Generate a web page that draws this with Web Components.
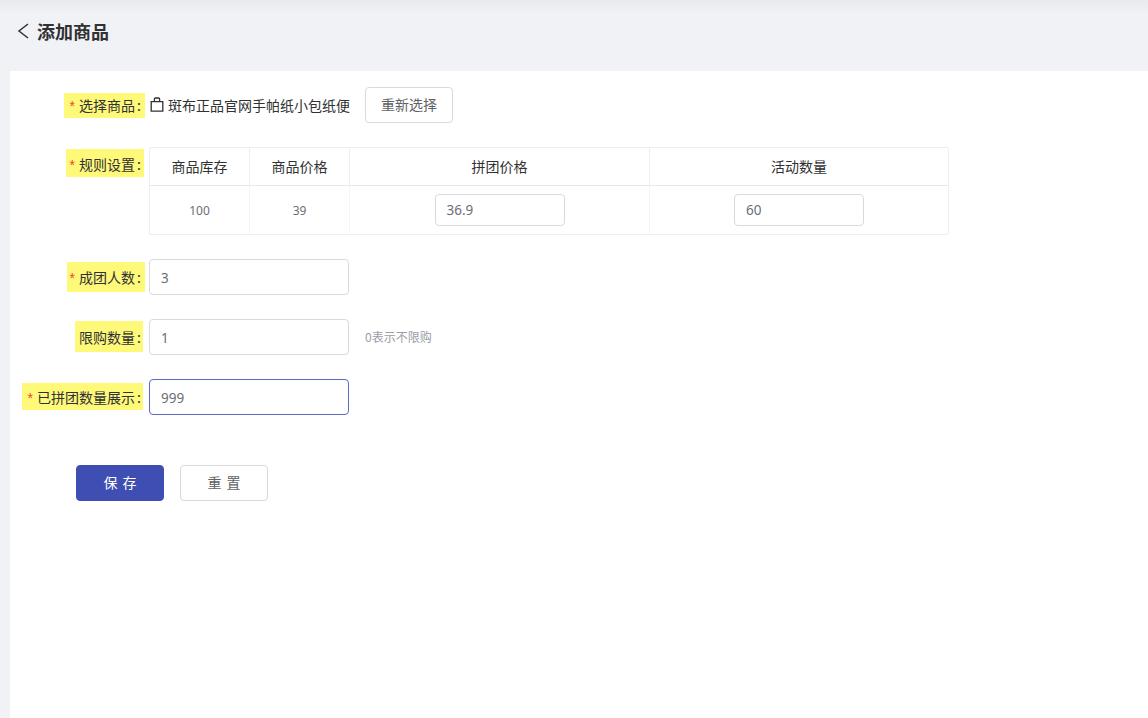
<!DOCTYPE html>
<html lang="zh"><head><meta charset="utf-8"><title>添加商品</title>
<style>
html,body{margin:0;height:100%;background:#f0f2f6;font-family:"Noto Sans CJK SC","Noto Sans",sans-serif;font-size:14px;overflow:hidden}
</style></head><body>
<add-page></add-page>
<script>
const F='"Noto Sans","Noto Sans CJK SC",sans-serif';
function def(name,css,html,init){customElements.define(name,class extends HTMLElement{connectedCallback(){if(this.shadowRoot)return;const s=this.attachShadow({mode:'open'});s.innerHTML='<style>'+css+'</style>'+html(this);if(init)init(this,s);}});}
def('page-header',`:host{display:flex;align-items:center;height:71px;box-sizing:border-box;padding:0 0 9px 17px;background:linear-gradient(#e9eaed,#f0f2f6 14px);color:#303133}
svg{width:13px;height:16px;margin-right:7px;flex:none}
h1{margin:0;font:700 18px/24px "Noto Sans CJK SC",sans-serif}`,
()=>`<svg viewBox="0 0 13 16"><path d="M11 1 2 8l9 7" fill="none" stroke="#303133" stroke-width="1.5"/></svg><h1><slot></slot></h1>`);
def('form-row',`:host{display:flex;align-items:flex-start;margin-bottom:var(--mb,24px)}
.lab{width:125px;margin-right:14px;flex:none;display:flex;justify-content:flex-end;padding-top:var(--lt,6px);box-sizing:border-box}
.hl{display:block;background:#fff97a;color:#303133;line-height:20px;padding:var(--pt,3px) 0 var(--pb,1px) var(--pl,5px);margin-right:calc(var(--cw,10px) * -1);white-space:nowrap}
.req{color:#f5402c;margin-right:4px;font-family:"Liberation Sans",sans-serif}
.col{display:inline-block;width:var(--cw,10px);padding-left:2px;box-sizing:border-box}
.c{display:flex;align-items:center;flex:none}`,
h=>`<div class="lab"><span class="hl">${h.hasAttribute('req')?'<span class="req">*</span>':''}${h.getAttribute('label')}<span class="col">:</span></span></div><div class="c"><slot></slot></div>`);
def('text-field',`:host{display:block;box-sizing:border-box;width:200px;height:36px;border:1px solid #d9dadf;border-radius:4px;background:#fff;padding-left:11px;color:#6b6e75;font:13.5px/36px ${F}}
:host([focus]){border-color:#5c6bc8}
:host([small]){width:130px;height:32px;line-height:30px}`,()=>`<slot></slot>`);
def('ui-button',`:host{display:inline-block;box-sizing:border-box;width:88px;height:36px;border:1px solid #d9dadf;border-radius:4px;background:#fff;color:#606266;text-align:center;word-spacing:2px;font:14px/33px "Noto Sans CJK SC",sans-serif}
:host([primary]){background:#3f4eb3;border-color:#3f4eb3;color:#fff}`,()=>`<slot></slot>`);
def('rule-table',`:host{display:grid;grid-template-columns:100px 100px 300px 298px;grid-template-rows:38px 48px;width:800px;box-sizing:border-box;border:1px solid #ebeef2;border-radius:2px;color:#303133}
div{display:flex;align-items:center;justify-content:center;box-sizing:border-box;border-right:1px solid #ebeef2}
.h{border-bottom:1px solid #e6e8ec;padding-bottom:1px}
.d{color:#6b6e75;font-size:12px;font-family:${F};border-right-color:#f4f5f8}
div:nth-of-type(4n){border-right:0}`,
()=>`<div class="h">商品库存</div><div class="h">商品价格</div><div class="h">拼团价格</div><div class="h">活动数量</div>
<div class="d">100</div><div class="d">39</div><div class="d"><text-field small>36.9</text-field></div><div class="d"><text-field small>60</text-field></div>`);
def('add-page',`:host{display:block;height:718px;box-sizing:border-box}
main{background:#fff;margin-left:10px;height:647px;box-sizing:border-box;padding-top:16px}
.prod{display:flex;align-items:center;color:#303133;white-space:nowrap;margin:-1px 15px 0 1px}
.prod svg{width:14px;height:15px;margin-right:4px;flex:none}
.hint{color:#9a9da6;font:12px/14px "Noto Sans CJK SC",sans-serif;margin:0 0 0 16px;white-space:nowrap}
.acts{display:flex;gap:16px;margin:50px 0 0 66px}`,
()=>`<page-header>添加商品</page-header><main>
<form-row req label="选择商品" style="--lt:6px;--pt:2px;--pb:2px;--pl:6px;--cw:10px"><span class="prod"><svg viewBox="0 0 14 15"><path d="M1.2 4.6h11.6v9.6H1.2zM4.4 4.6V2a1 1 0 0 1 1-1h3.2a1 1 0 0 1 1 1v2.6" fill="none" stroke="#303133" stroke-width="1.3"/></svg>斑布正品官网手帕纸小包纸便</span><ui-button>重新选择</ui-button></form-row>
<form-row req label="规则设置" style="--lt:2px;--pt:5px;--pb:2px;--pl:4px;--cw:9px"><rule-table></rule-table></form-row>
<form-row req label="成团人数" style="--lt:3px;--pt:5px;--pb:4px;--pl:3px;--cw:10px"><text-field>3</text-field></form-row>
<form-row label="限购数量" style="--lt:2px;--pt:6px;--pb:5px;--pl:4px;--cw:8px"><text-field>1</text-field><span class="hint">0表示不限购</span></form-row>
<form-row req label="已拼团数量展示" style="--lt:4px;--pt:4px;--pb:2px;--pl:6px;--cw:8px;--mb:0"><text-field focus>999</text-field></form-row>
<div class="acts"><ui-button primary>保 存</ui-button><ui-button>重 置</ui-button></div>
</main>`);
</script></body></html>
